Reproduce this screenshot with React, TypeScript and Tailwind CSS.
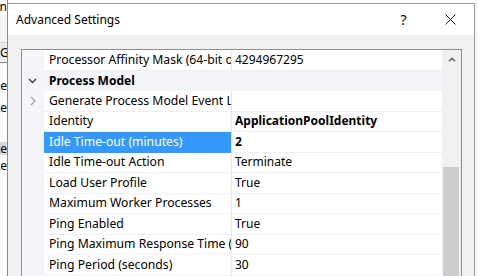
import React from 'react';

type Row = {
  kind: 'cat' | 'prop';
  name: string;
  value?: string;
  bold?: boolean;
  selected?: boolean;
  expander?: boolean;
};

const rows: Row[] = [
  { kind: 'prop', name: 'Processor Affinity Mask (64-bit option)', value: '4294967295' },
  { kind: 'cat', name: 'Process Model' },
  { kind: 'prop', name: 'Generate Process Model Event Log Entry', value: '', expander: true },
  { kind: 'prop', name: 'Identity', value: 'ApplicationPoolIdentity', bold: true },
  { kind: 'prop', name: 'Idle Time-out (minutes)', value: '2', bold: true, selected: true },
  { kind: 'prop', name: 'Idle Time-out Action', value: 'Terminate' },
  { kind: 'prop', name: 'Load User Profile', value: 'True' },
  { kind: 'prop', name: 'Maximum Worker Processes', value: '1' },
  { kind: 'prop', name: 'Ping Enabled', value: 'True' },
  { kind: 'prop', name: 'Ping Maximum Response Time (seconds)', value: '90' },
  { kind: 'prop', name: 'Ping Period (seconds)', value: '30' },
  { kind: 'prop', name: 'Shutdown Time Limit (seconds)', value: '90' },
];

function ChevronDown() {
  return (
    <svg width="9" height="6" viewBox="0 0 9 6" className="block">
      <path d="M1 1 L4.5 4.5 L8 1" fill="none" stroke="#3c3c3c" strokeWidth="1.4" />
    </svg>
  );
}

function ChevronRight() {
  return (
    <svg width="6" height="10" viewBox="0 0 6 10" className="block">
      <path d="M1 1 L5 5 L1 9" fill="none" stroke="#a6a6a6" strokeWidth="1.3" />
    </svg>
  );
}

function PropRow({ r }: { r: Row }) {
  if (r.kind === 'cat') {
    return (
      <div className="flex h-[20.5px] shrink-0 items-center bg-[#f3f5f9]">
        <div className="w-[22px] shrink-0 pl-[6px]">
          <ChevronDown />
        </div>
        <div className="pl-[5px] font-bold text-black whitespace-nowrap">{r.name}</div>
      </div>
    );
  }
  return (
    <div className="flex h-[20.5px] shrink-0">
      <div className="w-[22px] shrink-0 bg-[#f3f5f9] flex items-center pl-[8px]">
        {r.expander ? <ChevronRight /> : null}
      </div>
      <div
        className={
          r.selected
            ? 'w-[187px] shrink-0 overflow-hidden whitespace-nowrap pl-[5px] flex items-center bg-[#3399ff] text-white text-[12.2px]'
            : 'w-[187px] shrink-0 overflow-hidden whitespace-nowrap pl-[5px] flex items-center bg-white text-black text-[12.2px] border-b border-[#f0f1f6]'
        }
      >
        {r.name}
      </div>
      <div className="w-px shrink-0 bg-[#e6e6e6]" />
      <div
        className={
          r.bold
            ? 'flex-1 overflow-hidden whitespace-nowrap pl-[3px] flex items-center bg-white text-black font-bold border-b border-[#f0f1f6]'
            : 'flex-1 overflow-hidden whitespace-nowrap pl-[3px] flex items-center bg-white text-black border-b border-[#f0f1f6]'
        }
      >
        {r.value}
      </div>
    </div>
  );
}

export default function App() {
  return (
    <div className="w-[478px] h-[276px] overflow-hidden bg-white flex font-['Noto_Sans',sans-serif] text-[12px] leading-none text-black">
      {/* background window strip */}
      <div className="w-[8px] shrink-0 flex flex-col overflow-hidden border-r border-[#8a8a8a]">
        <div className="h-[15px] shrink-0 bg-white flex justify-end items-end overflow-hidden whitespace-nowrap pb-[2px]">
          <span>Application</span>
        </div>
        <div className="h-[28px] shrink-0 bg-[#f3f3f3] border-b border-[#d6d6d6]" />
        <div className="h-[20px] shrink-0 bg-[#e9e9e9] border-b border-[#8c8c8c] flex items-center overflow-hidden whitespace-nowrap">
          <span>Group</span>
        </div>
        <div className="flex-1 bg-[#fafafa] flex flex-col">
          <div className="h-[13px] shrink-0" />
          <div className="h-[20px] shrink-0 flex justify-end items-center overflow-hidden whitespace-nowrap">
            <span>Name</span>
          </div>
          <div className="h-[24px] shrink-0 flex justify-end items-center overflow-hidden whitespace-nowrap">
            <span>Delete</span>
          </div>
          <div className="h-[22px] shrink-0" />
          <div className="h-[13px] shrink-0 bg-[#d9d9d9] flex justify-end items-center overflow-hidden whitespace-nowrap">
            <span>Delete</span>
          </div>
          <div className="h-[22px] shrink-0 flex justify-end items-center overflow-hidden whitespace-nowrap">
            <span>Delete</span>
          </div>
        </div>
      </div>

      {/* dialog */}
      <div className="w-[467px] shrink-0 flex flex-col mt-[3px] border-t border-r border-[#9c9c9c] bg-[#f0f0f0]">
        <div className="h-[31px] shrink-0 bg-white flex items-center">
          <div className="pl-[8px] flex-1 text-[12px] text-black">Advanced Settings</div>
          <div className="w-[47px] h-full flex items-center justify-center text-[14px] text-black">?</div>
          <div className="w-[47px] h-full flex items-center justify-center">
            <svg width="11" height="11" viewBox="0 0 11 11" className="block">
              <path d="M0.5 0.5 L10.5 10.5 M10.5 0.5 L0.5 10.5" stroke="#1a1a1a" strokeWidth="1" />
            </svg>
          </div>
        </div>
        <div className="flex-1 pl-[13px] pr-[12px] pt-[14px] flex flex-col">
          <div className="flex-1 flex border-l border-t border-r border-[#8f8f8f] bg-white">
            <div className="w-[420px] shrink-0 flex flex-col">
              {rows.map((r, i) => (
                <PropRow key={i} r={r} />
              ))}
            </div>
            <div className="flex-1 bg-[#f0f0f0] flex flex-col">
              <div className="h-[17px] shrink-0 flex items-center justify-center pt-[2px]">
                <svg width="8" height="5" viewBox="0 0 8 5" className="block">
                  <path d="M1 4.2 L4 1.2 L7 4.2" fill="none" stroke="#606060" strokeWidth="1.5" />
                </svg>
              </div>
              <div className="h-[100px] shrink-0" />
              <div className="flex-1 ml-[1px] mr-[2px] bg-[#cdcdcd]" />
            </div>
          </div>
        </div>
      </div>
      <div className="flex-1 bg-[#f7f7f7]" />
    </div>
  );
}
